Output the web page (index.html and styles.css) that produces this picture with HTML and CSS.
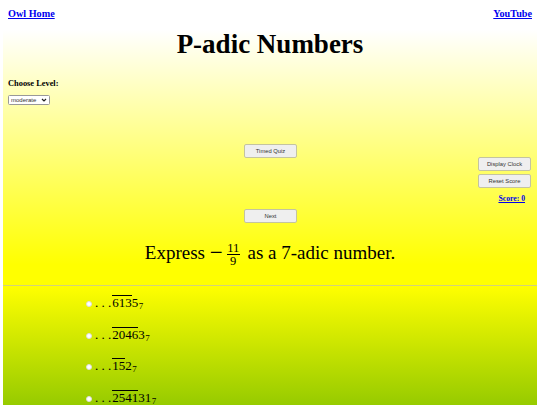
FILE: index.html
```html
<!DOCTYPE html>
<html>
<head lang="en">
    <meta charset="UTF-8">
    <title>P-adic Numbers</title>
    <link rel="stylesheet" href="styles.css">
</head>
<body>

<div class="topLinks">
    <a href="#">Owl Home</a>
    <a href="#">YouTube</a>
</div>

<div class="quizArea">
    <h1>P-adic Numbers</h1>
    <div class="levelBox">
        <label for="level">Choose Level:</label>
        <select id="level" class="levelSelect">
            <option>moderate</option>
        </select>
    </div>
    <div class="controls">
        <button class="btn quizBtn">Timed Quiz</button>
        <div class="sideBox">
            <button class="btn">Display Clock</button>
            <button class="btn">Reset Score</button>
            <a class="score" href="#">Score: 0</a>
        </div>
        <button class="btn nextBtn">Next</button>
    </div>
    <p class="question">
        Express <span class="minus">&minus;</span><span class="frac"><span class="num">11</span><span class="den">9</span></span> as a 7-adic number.
    </p>
</div>

<hr class="divider">

<div class="answers">
    <label class="answer"><input type="radio" name="ans"><span class="dots">. . .</span><span class="over">613</span>5<sub>7</sub></label>
    <label class="answer"><input type="radio" name="ans"><span class="dots">. . .</span><span class="over">2046</span>3<sub>7</sub></label>
    <label class="answer"><input type="radio" name="ans"><span class="dots">. . .</span><span class="over">15</span>2<sub>7</sub></label>
    <label class="answer"><input type="radio" name="ans"><span class="dots">. . .</span><span class="over">2541</span>31<sub>7</sub></label>
</div>

</body>
</html>
```

FILE: styles.css
```css
html,body{
    margin: 0;
    height: 405px;
    overflow: hidden;
    background: #fff;
    font-family: "Liberation Serif", serif;
}
.topLinks{
    display: flex;
    justify-content: space-between;
    padding: 8px 8px 0;
    height: 22px;
    font-size: 10.2px;
    font-weight: bold;
}
.topLinks a{
    color: #00e;
}
.quizArea{
    margin: 0 3px;
    height: 255px;
    background: linear-gradient(#fff, #ff0 92%);
}
h1{
    margin: 0;
    text-align: center;
    font-size: 27px;
    line-height: 29px;
}
.levelBox{
    margin-top: 20px;
    padding-left: 5px;
    font-size: 8.4px;
    font-weight: bold;
}
.levelBox label{
    display: block;
    height: 16px;
}
.levelSelect{
    display: block;
    appearance: none;
    width: 42px;
    height: 10px;
    padding: 0 0 0 2px;
    font-size: 6px;
    font-family: "Liberation Sans", sans-serif;
    color: #333;
    border: 1px solid #999;
    border-radius: 1.5px;
    background: #fff url("data:image/svg+xml,%3Csvg xmlns='http://www.w3.org/2000/svg' width='6' height='4'%3E%3Cpath d='M1 1l2 2 2-2' fill='none' stroke='%23222' stroke-width='1.2'/%3E%3C/svg%3E") no-repeat right 2px center;
}
.controls{
    position: relative;
    margin-top: 39px;
    height: 79px;
}
.btn{
    display: block;
    width: 53px;
    height: 13.5px;
    padding: 0;
    font-size: 5.8px;
    font-family: "Liberation Sans", sans-serif;
    color: #333;
    background: #efefef;
    border: 1px solid #c4c4a0;
    border-radius: 2px;
}
.quizBtn{
    margin-left: 241px;
}
.nextBtn{
    margin: 51.5px 0 0 241px;
}
.sideBox{
    position: absolute;
    top: 13px;
    right: 6px;
    width: 60px;
}
.sideBox .btn{
    margin: 0 0 3.5px auto;
}
.score{
    display: block;
    margin: 6px 6px 0 0;
    text-align: right;
    font-size: 7.7px;
    font-weight: bold;
    color: #00e;
}
.question{
    margin: 13px 0 0;
    text-align: center;
    font-size: 19px;
    line-height: 34px;
}
.minus{
    margin: 0 4px 0 0;
    font-size: 23px;
    line-height: 0;
    vertical-align: -1px;
}
.frac{
    display: inline-flex;
    flex-direction: column;
    vertical-align: middle;
    margin-right: 3px;
    text-align: center;
    font-size: 12.5px;
    line-height: 12.5px;
}
.num{
    padding: 0 .5px;
    border-bottom: 1px solid #000;
}
.divider{
    margin: 0 3px;
    height: 1px;
    border: 0;
    background: #d2d27a;
}
.answers{
    display: flex;
    flex-direction: column;
    gap: 16.7px;
    box-sizing: border-box;
    height: 119px;
    margin: 0 3px;
    padding: 9px 0 0 82px;
    background: linear-gradient(#ff0, #008000) 0 0 / 100% 290px no-repeat;
}
.answer{
    display: block;
    font-size: 13px;
    line-height: 15px;
}
.answer input{
    appearance: none;
    width: 6px;
    height: 6px;
    margin: 0 3px 0 1px;
    border: 1px solid #ddd;
    border-radius: 50%;
    background: #fff;
}
.dots{
    margin-right: 1px;
}
.over{
    display: inline-block;
    border-top: 1px solid #000;
    line-height: 13px;
}
sub{
    font-size: 9px;
    line-height: 0;
    vertical-align: -2px;
    margin-left: .5px;
}
```
